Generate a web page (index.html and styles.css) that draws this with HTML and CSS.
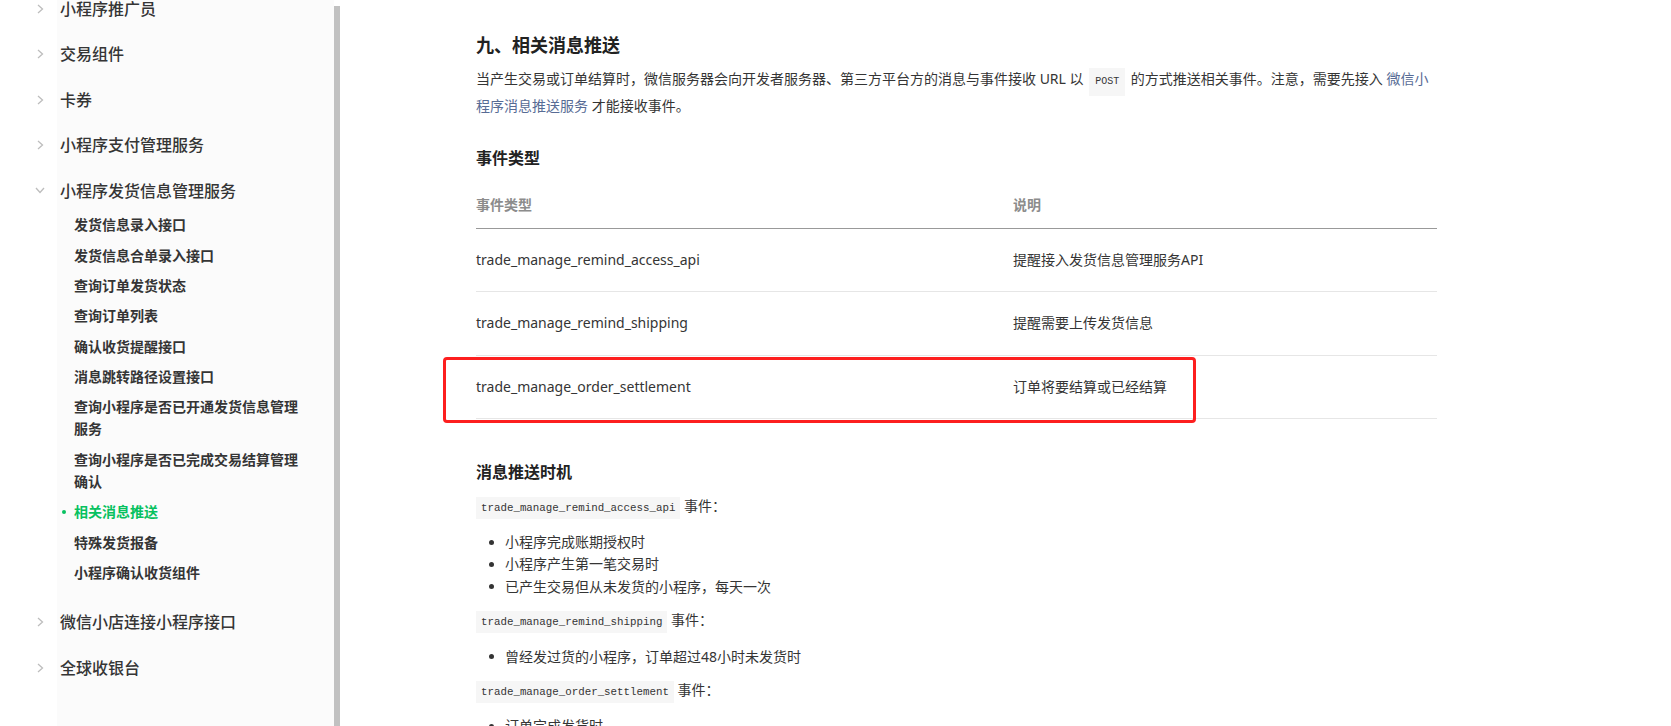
FILE: index.html
```html
<!DOCTYPE html>
<html lang="zh-CN">
<head>
<meta charset="utf-8">
<title>相关消息推送</title>
<link rel="stylesheet" href="styles.css">
</head>
<body>
<div class="page">
  <aside class="sidebar">
    <div class="nav-area">
      <ul class="nav">
        <li class="nav-item">
          <div class="nav-title"><span class="chev"><svg width="7" height="10" viewBox="0 0 7 10"><polyline points="1,1 5.5,5 1,9" fill="none" stroke="#bdbdbd" stroke-width="1.3"/></svg></span><span>小程序推广员</span></div>
        </li>
        <li class="nav-item">
          <div class="nav-title"><span class="chev"><svg width="7" height="10" viewBox="0 0 7 10"><polyline points="1,1 5.5,5 1,9" fill="none" stroke="#bdbdbd" stroke-width="1.3"/></svg></span><span>交易组件</span></div>
        </li>
        <li class="nav-item">
          <div class="nav-title"><span class="chev"><svg width="7" height="10" viewBox="0 0 7 10"><polyline points="1,1 5.5,5 1,9" fill="none" stroke="#bdbdbd" stroke-width="1.3"/></svg></span><span>卡券</span></div>
        </li>
        <li class="nav-item">
          <div class="nav-title"><span class="chev"><svg width="7" height="10" viewBox="0 0 7 10"><polyline points="1,1 5.5,5 1,9" fill="none" stroke="#bdbdbd" stroke-width="1.3"/></svg></span><span>小程序支付管理服务</span></div>
        </li>
        <li class="nav-item open">
          <div class="nav-title"><span class="chev"><svg width="10" height="7" viewBox="0 0 10 7"><polyline points="1,1 5,5.5 9,1" fill="none" stroke="#bdbdbd" stroke-width="1.3"/></svg></span><span>小程序发货信息管理服务</span></div>
          <ul class="sub">
            <li class="sub-item"><span class="dot"></span><span class="sub-text">发货信息录入接口</span></li>
            <li class="sub-item"><span class="dot"></span><span class="sub-text">发货信息合单录入接口</span></li>
            <li class="sub-item"><span class="dot"></span><span class="sub-text">查询订单发货状态</span></li>
            <li class="sub-item"><span class="dot"></span><span class="sub-text">查询订单列表</span></li>
            <li class="sub-item"><span class="dot"></span><span class="sub-text">确认收货提醒接口</span></li>
            <li class="sub-item"><span class="dot"></span><span class="sub-text">消息跳转路径设置接口</span></li>
            <li class="sub-item"><span class="dot"></span><span class="sub-text">查询小程序是否已开通发货信息管理服务</span></li>
            <li class="sub-item"><span class="dot"></span><span class="sub-text">查询小程序是否已完成交易结算管理确认</span></li>
            <li class="sub-item active"><span class="dot"></span><span class="sub-text">相关消息推送</span></li>
            <li class="sub-item"><span class="dot"></span><span class="sub-text">特殊发货报备</span></li>
            <li class="sub-item"><span class="dot"></span><span class="sub-text">小程序确认收货组件</span></li>
          </ul>
        </li>
        <li class="nav-item">
          <div class="nav-title"><span class="chev"><svg width="7" height="10" viewBox="0 0 7 10"><polyline points="1,1 5.5,5 1,9" fill="none" stroke="#bdbdbd" stroke-width="1.3"/></svg></span><span>微信小店连接小程序接口</span></div>
        </li>
        <li class="nav-item">
          <div class="nav-title"><span class="chev"><svg width="7" height="10" viewBox="0 0 7 10"><polyline points="1,1 5.5,5 1,9" fill="none" stroke="#bdbdbd" stroke-width="1.3"/></svg></span><span>全球收银台</span></div>
        </li>
      </ul>
    </div>
    <div class="scroll-track"><div class="scroll-thumb"></div></div>
  </aside>

  <main class="main">
    <article class="content">
      <h2 class="title">九、相关消息推送</h2>
      <p class="intro">当产生交易或订单结算时，微信服务器会向开发者服务器、第三方平台方的消息与事件接收 URL 以 <code class="code-post">POST</code> 的方式推送相关事件。注意，需要先接入 <a class="link">微信小程序消息推送服务</a> 才能接收事件。</p>

      <h3 class="subtitle">事件类型</h3>
      <table class="events">
        <colgroup><col class="col-type"><col class="col-desc"></colgroup>
        <thead>
          <tr><th>事件类型</th><th>说明</th></tr>
        </thead>
        <tbody>
          <tr><td>trade_manage_remind_access_api</td><td>提醒接入发货信息管理服务API</td></tr>
          <tr><td>trade_manage_remind_shipping</td><td>提醒需要上传发货信息</td></tr>
          <tr class="marked"><td><span class="mark-box"></span>trade_manage_order_settlement</td><td>订单将要结算或已经结算</td></tr>
        </tbody>
      </table>

      <h3 class="subtitle timing">消息推送时机</h3>
      <p class="event-line"><code class="code">trade_manage_remind_access_api</code> 事件：</p>
      <ul class="bullets">
        <li>小程序完成账期授权时</li>
        <li>小程序产生第一笔交易时</li>
        <li>已产生交易但从未发货的小程序，每天一次</li>
      </ul>
      <p class="event-line"><code class="code">trade_manage_remind_shipping</code> 事件：</p>
      <ul class="bullets">
        <li>曾经发过货的小程序，订单超过48小时未发货时</li>
      </ul>
      <p class="event-line"><code class="code">trade_manage_order_settlement</code> 事件：</p>
      <ul class="bullets">
        <li>订单完成发货时</li>
      </ul>
    </article>
  </main>
</div>
</body>
</html>
```

FILE: styles.css
```css
* { box-sizing: border-box; }

html, body {
  margin: 0;
  padding: 0;
  width: 1671px;
  height: 726px;
  overflow: hidden;
  background: #ffffff;
}

body {
  font-family: "Noto Sans", "Noto Sans CJK SC", sans-serif;
  color: #353535;
}

ul { list-style: none; margin: 0; padding: 0; }

.page {
  display: flex;
  height: 726px;
}

/* ---------- sidebar ---------- */
.sidebar {
  display: flex;
  width: 340px;
  flex: none;
  height: 726px;
  overflow: hidden;
}

.nav-area {
  width: 334px;
  background: linear-gradient(to right, #ffffff 57px, #fbfbfb 57px);
  overflow: hidden;
}

.nav {
  margin-top: -14.25px;
}

.nav-title {
  display: flex;
  align-items: center;
  padding: 10.75px 0 10.75px 35px;
  font-size: 16px;
  line-height: 24px;
  font-weight: 500;
  color: #353535;
}

.chev {
  width: 10px;
  height: 24px;
  display: flex;
  align-items: center;
  justify-content: center;
  margin-right: 15px;
}

.nav-item.open .nav-title {
  padding-bottom: 7.75px;
}

.sub {
  margin-bottom: 11.25px;
}

.sub-item {
  display: flex;
  align-items: flex-start;
  padding: 4.175px 30px 4.175px 62px;
  font-size: 14px;
  line-height: 22px;
  font-weight: 700;
  color: #353535;
}

.dot {
  flex: none;
  width: 4px;
  height: 4px;
  border-radius: 50%;
  margin: 9px 8px 0 0;
  background: transparent;
}

.sub-item.active { color: #07c160; }
.sub-item.active .dot { background: #07c160; }

.scroll-track {
  width: 6px;
  padding-top: 6px;
  display: flex;
  flex-direction: column;
}

.scroll-thumb {
  flex: 1;
  background: #c1c1c1;
}

/* ---------- main ---------- */
.main {
  flex: 1;
  padding-left: 136px;
}

.content {
  width: 961px;
  padding-top: 31px;
}

.title {
  margin: 0;
  font-size: 18px;
  line-height: 28px;
  font-weight: 700;
  color: #222;
}

.intro {
  margin: 7.5px 0 0;
  font-size: 14px;
  line-height: 24px;
}

.link { color: #576b95; text-decoration: none; }

.code-post {
  font-family: "Liberation Mono", "DejaVu Sans Mono", monospace;
  font-size: 10px;
  background: #f6f6f6;
  padding: 8px 6px 9px;
  margin: 0 2px;
  color: #353535;
}

.subtitle {
  margin: 28.5px 0 0;
  font-size: 16px;
  line-height: 24px;
  font-weight: 700;
  color: #222;
}

.events {
  margin-top: 12.5px;
  width: 961px;
  border-collapse: collapse;
  font-size: 14px;
}

.col-type { width: 537px; }

.events th {
  text-align: left;
  padding: 11.5px 0;
  line-height: 22px;
  font-weight: 600;
  color: #8c8c8c;
  border-bottom: 1px solid #999999;
}

.events td {
  padding: 20.25px 0;
  line-height: 22px;
  color: #353535;
  border-bottom: 1px solid #e6e6e6;
}

.events tr.marked td:first-child {
  position: relative;
}

.mark-box {
  position: absolute;
  left: -33px;
  top: 1.5px;
  width: 753px;
  height: 66px;
  border: 3px solid #fd1f1f;
  border-radius: 4px;
}

.subtitle.timing {
  margin-top: 41px;
}

.event-line {
  margin: 10.5px 0 12px;
  font-size: 14px;
  line-height: 22.4px;
}

.code {
  font-family: "Liberation Mono", "DejaVu Sans Mono", monospace;
  font-size: 10.8px;
  background: #f6f6f6;
  padding: 5px 5px;
  color: #353535;
}

.bullets {
  margin: 12px 0 11px;
}

.bullets li {
  display: flex;
  align-items: center;
  font-size: 14px;
  line-height: 22.4px;
}

.bullets li::before {
  content: "";
  width: 5px;
  height: 5px;
  border-radius: 50%;
  background: #333;
  margin: 0 11px 0 13px;
  flex: none;
}
```
